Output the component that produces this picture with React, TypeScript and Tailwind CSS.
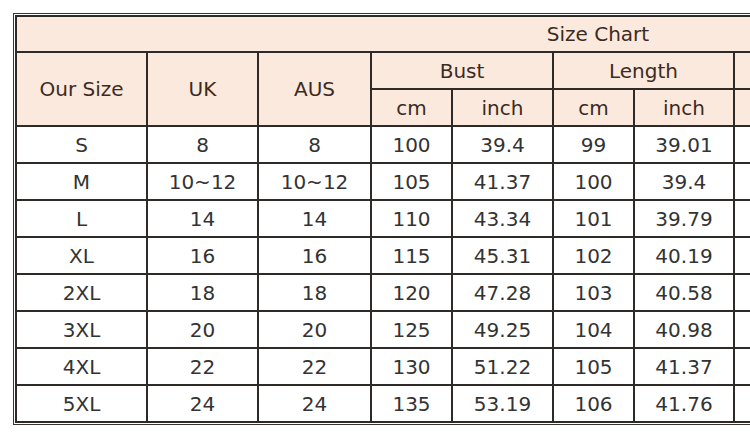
import React from 'react';

interface SizeRow {
  size: string;
  uk: string;
  aus: string;
  bustCm: string;
  bustIn: string;
  lenCm: string;
  lenIn: string;
}

const rows: SizeRow[] = [
  { size: 'S', uk: '8', aus: '8', bustCm: '100', bustIn: '39.4', lenCm: '99', lenIn: '39.01' },
  { size: 'M', uk: '10~12', aus: '10~12', bustCm: '105', bustIn: '41.37', lenCm: '100', lenIn: '39.4' },
  { size: 'L', uk: '14', aus: '14', bustCm: '110', bustIn: '43.34', lenCm: '101', lenIn: '39.79' },
  { size: 'XL', uk: '16', aus: '16', bustCm: '115', bustIn: '45.31', lenCm: '102', lenIn: '40.19' },
  { size: '2XL', uk: '18', aus: '18', bustCm: '120', bustIn: '47.28', lenCm: '103', lenIn: '40.58' },
  { size: '3XL', uk: '20', aus: '20', bustCm: '125', bustIn: '49.25', lenCm: '104', lenIn: '40.98' },
  { size: '4XL', uk: '22', aus: '22', bustCm: '130', bustIn: '51.22', lenCm: '105', lenIn: '41.37' },
  { size: '5XL', uk: '24', aus: '24', bustCm: '135', bustIn: '53.19', lenCm: '106', lenIn: '41.76' },
];

const head = 'flex items-center justify-center bg-[#fce9dd] text-[#3b2b22]';
const cell = 'flex items-center justify-center bg-white text-[#333333]';

export default function App() {
  return (
    <div className="w-full h-[437px] overflow-hidden bg-white font-['DejaVu_Sans',sans-serif] text-[20px] leading-none">
      <div className="ml-[13px] mt-[13px] w-max border border-[#3a3330] p-[1px] bg-white">
        <div className="grid grid-cols-[129px_109px_111px_79px_99px_79px_98px_79px_98px_79px_98px_82px] grid-rows-[34px_35px_35px_repeat(8,35px)] gap-[2px] p-[2px] bg-[#2e2a28]">
          {/* title spans the whole chart, most of it is off screen */}
          <div className={`${head} col-span-12`}>Size Chart</div>

          <div className={`${head} row-span-2`}>Our Size</div>
          <div className={`${head} row-span-2`}>UK</div>
          <div className={`${head} row-span-2`}>AUS</div>
          <div className={`${head} col-span-2`}>Bust</div>
          <div className={`${head} col-span-2`}>Length</div>
          <div className={`${head} col-span-2`} />
          <div className={`${head} col-span-2`} />
          <div className={`${head} row-span-2`} />

          <div className={head}>cm</div>
          <div className={head}>inch</div>
          <div className={head}>cm</div>
          <div className={head}>inch</div>
          <div className={head} />
          <div className={head} />
          <div className={head} />
          <div className={head} />

          {rows.map((r) => (
            <React.Fragment key={r.size}>
              <div className={cell}>{r.size}</div>
              <div className={cell}>{r.uk}</div>
              <div className={cell}>{r.aus}</div>
              <div className={cell}>{r.bustCm}</div>
              <div className={cell}>{r.bustIn}</div>
              <div className={cell}>{r.lenCm}</div>
              <div className={cell}>{r.lenIn}</div>
              <div className={cell} />
              <div className={cell} />
              <div className={cell} />
              <div className={cell} />
              <div className={cell} />
            </React.Fragment>
          ))}
        </div>
      </div>
    </div>
  );
}
